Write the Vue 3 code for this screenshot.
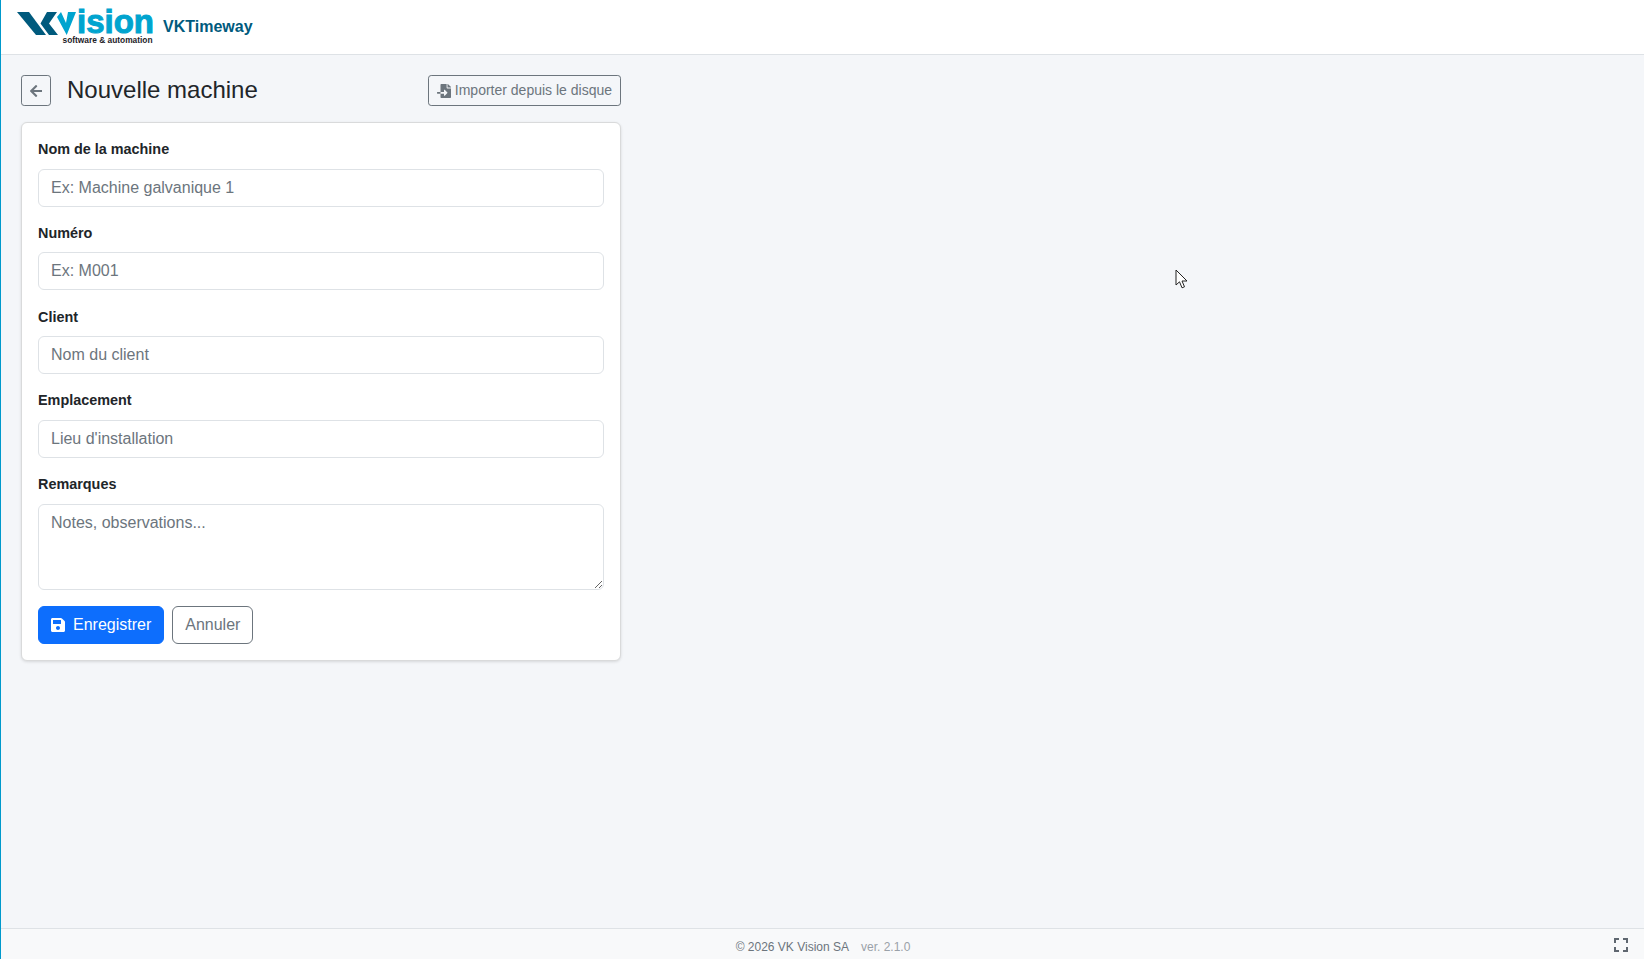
<script setup>
const fields = [
  { label: 'Nom de la machine', placeholder: 'Ex: Machine galvanique 1' },
  { label: 'Numéro', placeholder: 'Ex: M001' },
  { label: 'Client', placeholder: 'Nom du client' },
  { label: 'Emplacement', placeholder: "Lieu d'installation" },
]
</script>

<template>
  <div class="shell">
    <header class="topbar">
      <svg class="logo" width="140" height="54" viewBox="16 0 140 54" aria-label="VK Vision">
        <polygon points="17,12 29,12 46,35 36,35" fill="#005a7d" />
        <polygon points="47,12 57,12 49,23.500 58,35 49,35 40.500,23.500" fill="#005a7d" />
        <polygon points="57,17 61,12 66,23 68,12 76,12 66.700,35" fill="#00a4cf" />
        <text x="77" y="33" class="wordmark">ision</text>
        <text x="62.500" y="43" class="tagline" textLength="90" lengthAdjust="spacingAndGlyphs">software &amp; automation</text>
      </svg>
      <span class="app-name">VKTimeway</span>
    </header>

    <main class="content">
      <div class="panel">
        <div class="title-row">
          <button class="btn-back" type="button" aria-label="Retour">
            <svg width="12.250" height="14" viewBox="0 0 448 512" fill="currentColor">
              <path d="M257.500 445.100l-22.200 22.200c-9.400 9.400-24.600 9.400-33.900 0L7 273c-9.400-9.400-9.400-24.600 0-33.900L201.400 44.700c9.400-9.400 24.600-9.400 33.900 0l22.200 22.200c9.500 9.500 9.300 25-.4 34.300L136.600 216H424c13.300 0 24 10.700 24 24v32c0 13.300-10.700 24-24 24H136.600l120.500 114.800c9.800 9.300 10 24.800.4 34.300z" />
            </svg>
          </button>
          <h1 class="title">Nouvelle machine</h1>
          <button class="btn-import" type="button">
            <svg width="14" height="14" viewBox="0 0 512 512" fill="currentColor">
              <path d="M16 288c-8.800 0-16 7.200-16 16v32c0 8.800 7.200 16 16 16h112v-64zm489-183L407.100 7c-4.500-4.500-10.600-7-17-7H384v128h128v-6.100c0-6.400-2.500-12.500-7-16.900zm-153 31V0H152c-13.300 0-24 10.700-24 24v264h128v-65.200c0-14.300 17.300-21.400 27.400-11.300L379 308c6.600 6.700 6.600 17.400 0 24l-95.700 96.400c-10.100 10.100-27.400 3-27.400-11.300V352H128v136c0 13.300 10.700 24 24 24h336c13.300 0 24-10.700 24-24V160H376c-13.200 0-24-10.800-24-24z" />
            </svg>
            <span class="import-text">Importer depuis le disque</span>
          </button>
        </div>

        <form class="card" @submit.prevent>
          <div v-for="f in fields" :key="f.label" class="field">
            <label class="field-label">{{ f.label }}</label>
            <input class="control" type="text" :placeholder="f.placeholder" />
          </div>
          <div class="field">
            <label class="field-label">Remarques</label>
            <textarea class="control area" placeholder="Notes, observations..."></textarea>
          </div>
          <div class="actions">
            <button class="btn-save" type="submit">
              <svg width="14" height="16" viewBox="0 0 448 512" fill="currentColor">
                <path d="M433.941 129.941l-83.882-83.882A48 48 0 0 0 316.118 32H48C21.490 32 0 53.490 0 80v352c0 26.510 21.490 48 48 48h352c26.510 0 48-21.490 48-48V163.882a48 48 0 0 0-14.059-33.941zM224 416c-35.346 0-64-28.654-64-64 0-35.346 28.654-64 64-64s64 28.654 64 64c0 35.346-28.654 64-64 64zm96-304.520V212c0 6.627-5.373 12-12 12H76c-6.627 0-12-5.373-12-12V108c0-6.627 5.373-12 12-12h228.520c3.183 0 6.235 1.264 8.485 3.515l3.480 3.480A11.996 11.996 0 0 1 320 111.480z" />
              </svg>
              Enregistrer
            </button>
            <button class="btn-cancel" type="button">Annuler</button>
          </div>
        </form>
      </div>
    </main>

    <footer class="footer">
      <span class="copy">© 2026 VK Vision SA</span>
      <span class="ver">ver. 2.1.0</span>
      <svg class="full" width="14" height="14" viewBox="0 0 14 14" fill="none" stroke="#5f6770" stroke-width="2">
        <path d="M1 5V1h4M9 1h4v4M13 9v4H9M5 13H1V9" />
      </svg>
    </footer>

    <svg class="cursor" width="14" height="21" viewBox="0 0 14 21">
      <path d="M1 1v15l3.500-3.200 2.500 6 2.500-1-2.500-5.800h5z" fill="#fff" stroke="#222" stroke-width="1" />
    </svg>
  </div>
</template>

<style>
html, body { margin: 0; padding: 0; }
</style>

<style scoped>
.shell {
  position: relative;
  box-sizing: border-box;
  height: 959px;
  display: flex;
  flex-direction: column;
  overflow: hidden;
  background: #f4f6f9;
  border-left: 1px solid #0099cc;
  font-family: "Liberation Sans", Arial, sans-serif;
  font-size: 16px;
  color: #212529;
}
.topbar {
  box-sizing: border-box;
  height: 55px;
  flex: none;
  display: flex;
  align-items: center;
  gap: 7px;
  padding-left: 15px;
  background: #fff;
  border-bottom: 1px solid #dee2e6;
}
.logo { display: block; }
.wordmark { font: 700 33px "Liberation Sans", sans-serif; fill: #00a4cf; stroke: #00a4cf; stroke-width: 1px; }
.tagline { font: 700 8.500px "Liberation Sans", sans-serif; fill: #1d2227; }
.app-name { font-size: 16px; font-weight: 700; color: #005a7d; }
.content { flex: 1; min-height: 0; padding: 20px 20px; }
.panel { width: 600px; }
.title-row { display: flex; align-items: center; height: 31px; margin-bottom: 16px; }
button { font-family: inherit; cursor: pointer; }
.btn-back {
  box-sizing: border-box;
  width: 30px;
  height: 31px;
  display: flex;
  align-items: center;
  justify-content: center;
  padding: 0;
  color: #6c757d;
  background: transparent;
  border: 1px solid #6c757d;
  border-radius: 3.200px;
}
.title { flex: 1; margin: 0 0 0 16px; font-size: 24px; font-weight: 500; line-height: 1.2; }
.btn-import {
  box-sizing: border-box;
  height: 31px;
  display: flex;
  align-items: center;
  gap: 4px;
  padding: 0 8px;
  font-size: 14px;
  color: #6c757d;
  background: transparent;
  border: 1px solid #6c757d;
  border-radius: 3.200px;
}
.import-text { margin-top: -1px; }
.card {
  box-sizing: border-box;
  padding: 16px;
  background: #fff;
  border: 1px solid #d9dadb;
  border-radius: 6px;
  box-shadow: 0 1px 3px rgba(0,0,0,.12);
}
.field { margin-bottom: 16.200px; }
.field-label {
  display: block;
  margin-bottom: 8px;
  font-size: 14.400px;
  line-height: 21.600px;
  font-weight: 700;
}
.control {
  display: block;
  box-sizing: border-box;
  width: 100%;
  height: 38px;
  padding: 6px 12px;
  font: 16px/1.5 "Liberation Sans", Arial, sans-serif;
  color: #212529;
  background: #fff;
  border: 1px solid #dee2e6;
  border-radius: 6px;
  outline: none;
}
.control::placeholder { color: #6c757d; opacity: 1; }
.area { height: 86px; resize: vertical; }
.actions { display: flex; gap: 8px; }
.btn-save, .btn-cancel {
  box-sizing: border-box;
  height: 38px;
  padding: 0 12px;
  font-size: 16px;
  border-radius: 6px;
}
.btn-save {
  display: flex;
  align-items: center;
  gap: 8px;
  color: #fff;
  background: #0d6efd;
  border: 1px solid #0d6efd;
}
.btn-cancel { color: #6c757d; background: transparent; border: 1px solid #6c757d; }
.footer {
  position: relative;
  box-sizing: border-box;
  height: 31px;
  flex: none;
  display: flex;
  align-items: center;
  justify-content: center;
  gap: 12px;
  padding: 5px 0 0 1px;
  font-size: 12px;
  background: #f8f9fa;
  border-top: 1px solid #dee2e6;
}
.copy { color: #6c757d; }
.ver { color: #9aa1a8; }
.full { position: absolute; right: 16px; top: 9px; }
.cursor { position: absolute; left: 1174px; top: 269px; }
</style>
